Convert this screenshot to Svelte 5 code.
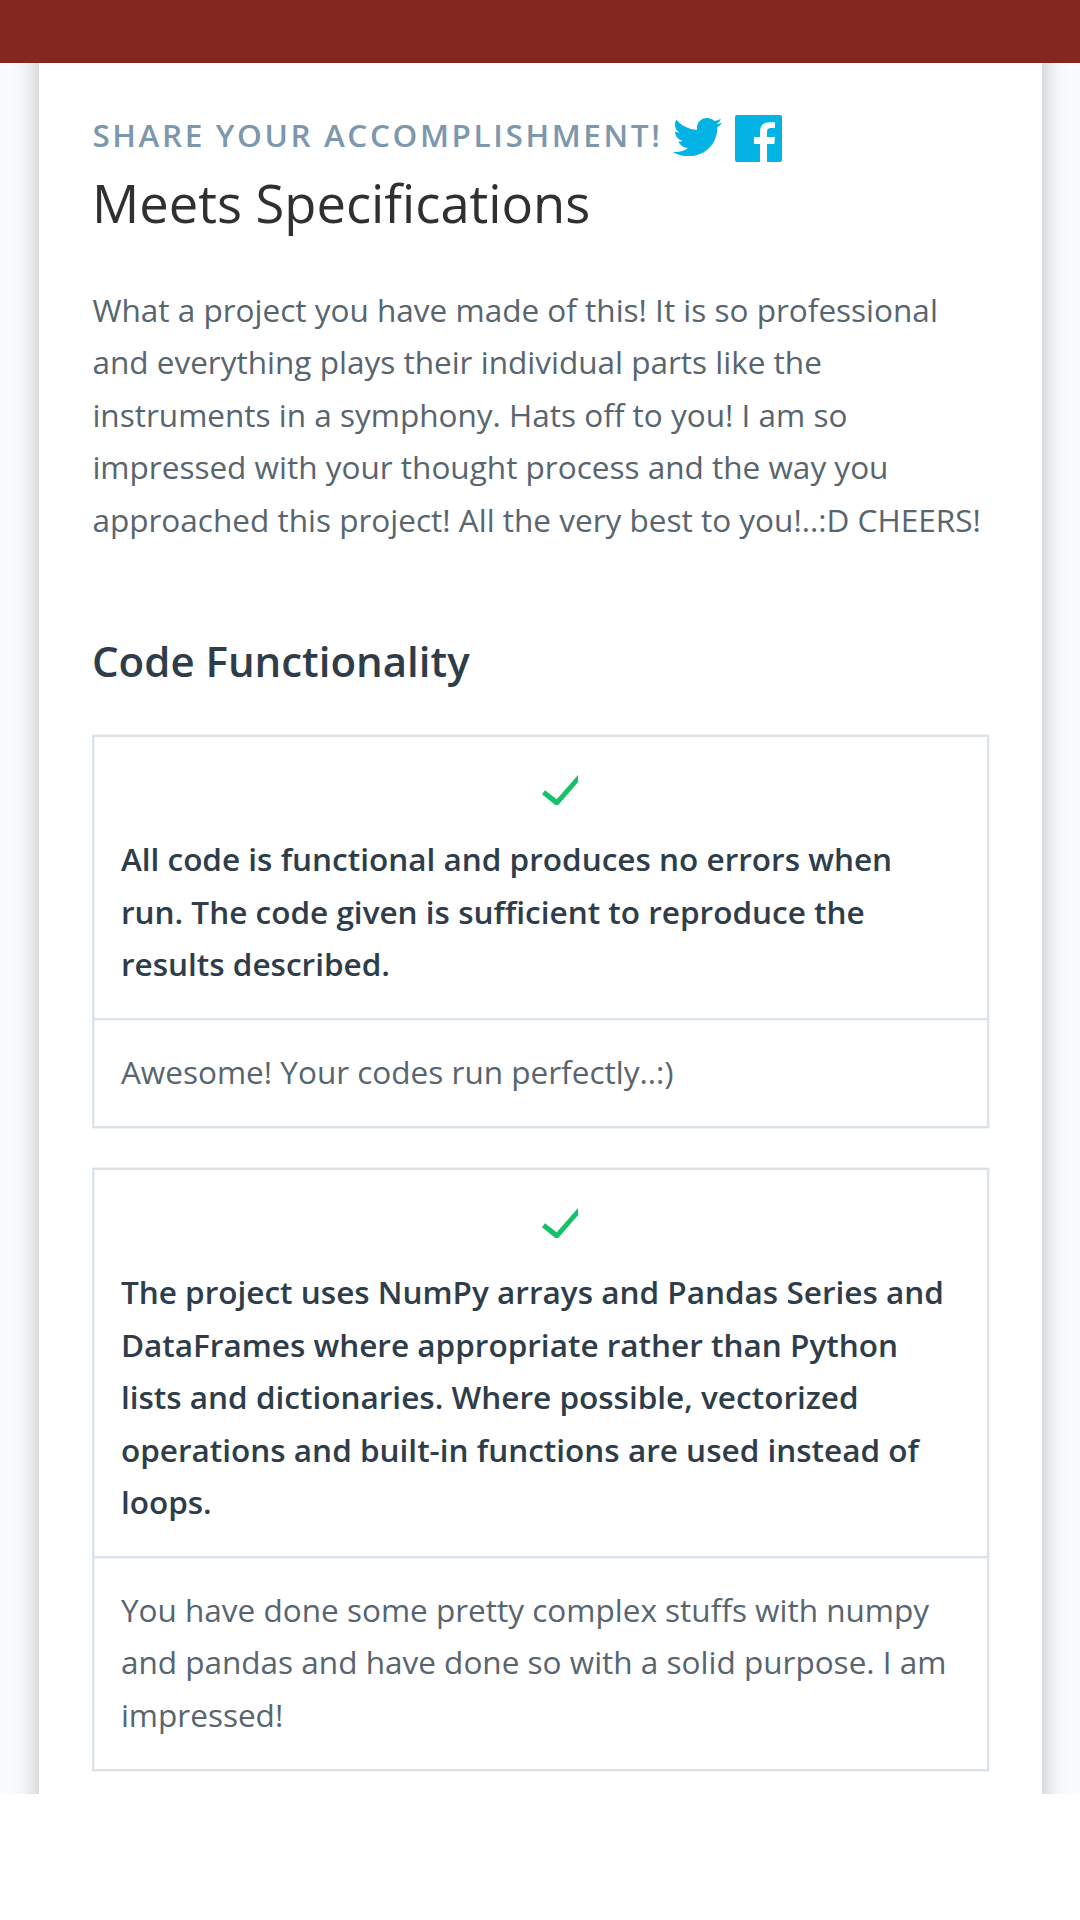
<script>
  const summary = [
    'What a project you have made of this! It is so professional',
    'and everything plays their individual parts like the',
    'instruments in a symphony. Hats off to you! I am so',
    'impressed with your thought process and the way you',
    'approached this project! All the very best to you!..:D CHEERS!'
  ];

  const reviews = [
    {
      criterion: [
        'All code is functional and produces no errors when',
        'run. The code given is sufficient to reproduce the',
        'results described.'
      ],
      comment: ['Awesome! Your codes run perfectly..:)']
    },
    {
      criterion: [
        'The project uses NumPy arrays and Pandas Series and',
        'DataFrames where appropriate rather than Python',
        'lists and dictionaries. Where possible, vectorized',
        'operations and built-in functions are used instead of',
        'loops.'
      ],
      comment: [
        'You have done some pretty complex stuffs with numpy',
        'and pandas and have done so with a solid purpose. I am',
        'impressed!'
      ]
    }
  ];
</script>

{#snippet lines(rows)}
  {#each rows as row}<span class="line">{row}</span>{/each}
{/snippet}

<div class="topbar"></div>
<main class="page">
  <article class="card">
    <div class="share">
      <span class="share-label">SHARE YOUR ACCOMPLISHMENT!</span>
      <svg class="twitter" viewBox="0 2.25 24 19.5" preserveAspectRatio="none">
        <path d="M23.954 4.569c-.885.389-1.83.654-2.825.775 1.014-.611 1.794-1.574 2.163-2.723-.951.555-2.005.959-3.127 1.184-.896-.959-2.173-1.559-3.591-1.559-2.717 0-4.92 2.203-4.92 4.917 0 .39.045.765.127 1.124C7.691 8.094 4.066 6.13 1.64 3.161c-.427.722-.666 1.561-.666 2.475 0 1.71.87 3.213 2.188 4.096-.807-.026-1.566-.248-2.228-.616v.061c0 2.385 1.693 4.374 3.946 4.827-.413.111-.849.171-1.296.171-.314 0-.615-.03-.916-.086.631 1.953 2.445 3.377 4.604 3.417-1.68 1.319-3.809 2.105-6.102 2.105-.39 0-.779-.023-1.17-.067 2.189 1.394 4.768 2.209 7.557 2.209 9.054 0 13.999-7.496 13.999-13.986 0-.209 0-.42-.015-.63.961-.689 1.8-1.56 2.46-2.548l-.047-.02z" />
      </svg>
      <svg class="facebook" viewBox="0 0 141 141">
        <path fill-rule="evenodd" d="M6 0H135Q141 0 141 6V135Q141 141 135 141H96V87H118L120 66H96V51C96 43 99 39 108 39H120V22H103C85 22 75 32 75 50V66H57V87H75V141H6Q0 141 0 135V6Q0 0 6 0Z" />
      </svg>
    </div>
    <h1>Meets Specifications</h1>
    <p class="summary">{@render lines(summary)}</p>

    <h2>Code Functionality</h2>
    {#each reviews as review}
      <section class="box">
        <div class="criterion">
          <svg class="check" viewBox="22 55 36 30">
            <path d="M22 74.3L25 70.3L36.7 79.3L58 55V62.3L38.3 85H35.3Z" />
          </svg>
          <p>{@render lines(review.criterion)}</p>
        </div>
        <div class="comment">
          <p>{@render lines(review.comment)}</p>
        </div>
      </section>
    {/each}
  </article>
</main>

<style>
  :global(body) {
    margin: 0;
    background: #fff;
  }
  .topbar {
    height: 63px;
    background: #832821;
  }
  .page {
    height: 1731px;
    overflow: hidden;
    background: #fafbfd;
    font-family: 'Open Sans', sans-serif;
    font-size: 31.52px;
    line-height: 52.5px;
    color: #58656f;
  }
  .card {
    box-sizing: border-box;
    width: 1003px;
    height: 1851px;
    margin: -60px 0 0 39px;
    padding: 106px 53px 0;
    background: #fff;
    box-shadow: 0 0 25px rgba(0, 0, 0, 0.26);
  }
  h1,
  h2,
  p {
    margin: 0;
  }
  .line {
    display: block;
    white-space: nowrap;
  }
  .share {
    display: flex;
    height: 58.6px;
    padding-left: 0.4px;
  }
  .share-label {
    width: 580px;
    font-weight: 600;
    letter-spacing: 2.6px;
    white-space: nowrap;
    color: #7d97ad;
  }
  .twitter,
  .facebook {
    flex: none;
    fill: #02b3e4;
  }
  .twitter {
    width: 49.3px;
    height: 38.3px;
    margin: 8.7px 12.7px 0 0.6px;
  }
  .facebook {
    width: 47px;
    height: 47px;
    margin-top: 6px;
  }
  h1 {
    height: 116.4px;
    font-size: 52.5px;
    font-weight: 400;
    line-height: 70px;
    color: #303030;
  }
  .summary {
    height: 347px;
    padding-left: 0.4px;
  }
  h2 {
    height: 104px;
    font-size: 42px;
    font-weight: 600;
    line-height: 60px;
    color: #2e3d49;
  }
  .box {
    margin-bottom: 40px;
    border: 2px solid #dbe2e8;
    box-shadow:
      1px 0 #f2f5f7,
      0 1px #f2f5f7,
      0 -1px #f2f5f7,
      inset 1px 0 #eff2f5;
  }
  .criterion {
    padding: 38px 26.9px 27.3px;
    border-bottom: 2px solid #dbe2e8;
    font-weight: 600;
    color: #2e3d49;
  }
  .check {
    display: block;
    width: 36px;
    height: 30px;
    margin: 0 0 28.2px 421.1px;
    fill: #15c26b;
  }
  .comment {
    padding: 25.9px 26.9px 27.6px;
    box-shadow: inset 0 1px #eff2f5;
  }
</style>
